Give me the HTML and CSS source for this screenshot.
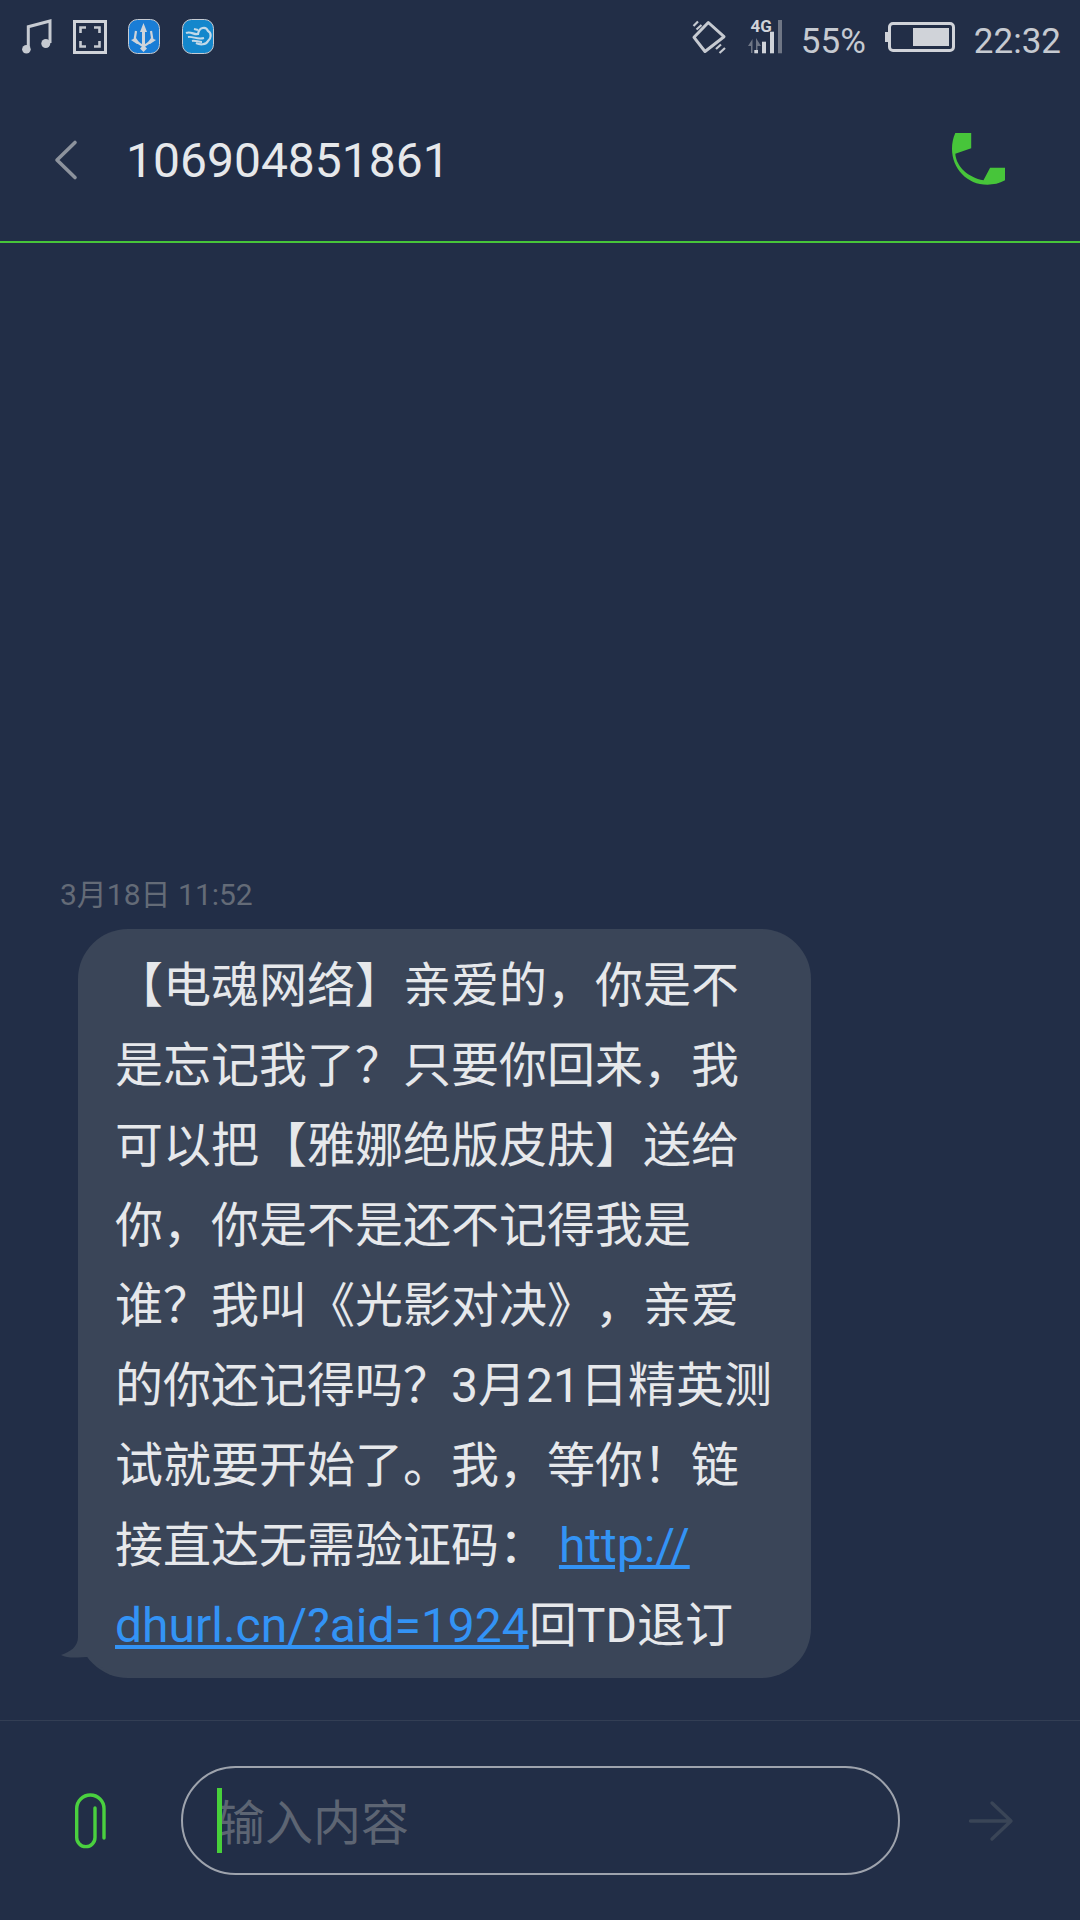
FILE: index.html

```html
<!DOCTYPE html>
<html>
  <head>
    <meta charset="UTF-8">
    <title>106904851861</title>
    <link rel="stylesheet" href="styles.css">
  </head>
  <body>
    <div class="status-bar">
      <div class="status-left">
        <svg class="icon-music" viewBox="0 0 30 34" width="30" height="34">
          <path d="M6.300 29V6.700L28 1V23" fill="none" stroke="#c6cad1" stroke-width="3"/>
          <circle cx="4.400" cy="29.300" r="4.300" fill="#c6cad1"/>
          <circle cx="23.800" cy="23.500" r="4.500" fill="#c6cad1"/>
        </svg>
        <svg class="icon-shot" viewBox="0 0 34 34" width="34" height="34">
          <rect x="1.500" y="1.500" width="31" height="31" fill="none" stroke="#d0d3d9" stroke-width="3"/>
          <path d="M7.500 13V7.500H13M21 7.500H26.500V13M26.500 21V26.500H21M13 26.500H7.500V21" fill="none" stroke="#c6cad1" stroke-width="2.600"/>
        </svg>
        <svg class="icon-app" viewBox="0 0 32 35" width="32" height="35">
          <rect x="0.500" y="0.500" width="31" height="34" rx="9" fill="#1a7dd6" stroke="#c6cad1"/>
          <path d="M15.500 4L19 13H17V28H14V13H12Z" fill="#d0d4da"/>
          <path d="M8 12L6.500 21.500L15.500 27.500L24.500 21.500L23 12" fill="none" stroke="#d0d4da" stroke-width="2.200"/>
          <path d="M3 21L8 19L12 24.500L9 25ZM28 21L23 19L19 24.500L22 25ZM15.500 26L19 29.500L15.500 33L12 29.500Z" fill="#d0d4da"/>
        </svg>
        <svg class="icon-app" viewBox="0 0 32 35" width="32" height="35">
          <rect x="0.500" y="0.500" width="31" height="34" rx="9" fill="#1487cc" stroke="#c6cad1"/>
          <path d="M4 14C9 12 12 16 16 15C17 8 24 7 26 12C30 14 29 20 26 22C24 26 18 26 14 24" fill="none" stroke="#c3d9e8" stroke-width="2.200"/>
          <path d="M6 18C11 17 15 21 22 19M10 22C13 21 16 23 20 23M12 10L16 11" fill="none" stroke="#c3d9e8" stroke-width="2"/>
        </svg>
      </div>
      <div class="status-right">
        <svg class="icon-rotate" viewBox="0 0 34 34" width="34" height="34">
          <path d="M16.300 2.500L32 16.700L13 31.500L2 17.300Z" fill="none" stroke="#c6cad1" stroke-width="3" stroke-linejoin="round"/>
          <path d="M1.500 6L6 1.500M4.500 9.500L9.500 5M24 29L29 24.500M27.500 33L33 28" fill="none" stroke="#c6cad1" stroke-width="2.200"/>
        </svg>
        <svg class="icon-signal" viewBox="0 0 34 34" width="34" height="34">
          <text x="2.500" y="12" class="net-label">4G</text>
          <path d="M0 26L4.500 19V33H3V26ZM8 25L8 18L13 26H9.500V30H8Z" fill="#6f7685"/>
          <rect x="6.300" y="30" width="3.700" height="3.300" fill="#d0d3d9"/>
          <rect x="14" y="21.700" width="4" height="11.600" fill="#d0d3d9"/>
          <rect x="22" y="11.700" width="4" height="21.600" fill="#d0d3d9"/>
          <rect x="30" y="0" width="4" height="33.300" fill="#6f7685"/>
        </svg>
        <span class="status-text percent">55%</span>
        <div class="battery">
          <div class="battery-nub"></div>
          <div class="battery-body">
            <div class="battery-fill"></div>
          </div>
        </div>
        <span class="status-text clock">22:32</span>
      </div>
    </div>

    <div class="title-bar">
      <svg class="icon-back" viewBox="0 0 24 40" width="24" height="40">
        <path d="M21 2.500L3 20L21 37.500" fill="none" stroke="#8d939d" stroke-width="3.600" stroke-linecap="round" stroke-linejoin="round"/>
      </svg>
      <div class="title">106904851861</div>
      <svg class="icon-phone" viewBox="150 66 170 166" width="57" height="55">
        <path d="M165 72H213V118L165 135C168 175 205 207 250 215L270 177H315V215C298 225 280 228 262 228C200 228 155 178 155 120C155 103 158 87 165 72Z" fill="#47c53a"/>
      </svg>
    </div>

    <div class="thread">
      <div class="date">3月18日 11:52</div>
      <div class="bubble">
        <svg class="bubble-tail" viewBox="0 0 50 60" width="50" height="60">
          <path d="M18 0V18C18 28 10 33 1 36C8 40 20 38 30 38C36 44 42 50 50 54V0Z" fill="#3a4558"/>
        </svg>
        【电魂网络】亲爱的，你是不<br>
        是忘记我了？只要你回来，我<br>
        可以把【雅娜绝版皮肤】送给<br>
        你，你是不是还不记得我是<br>
        谁？我叫《光影对决》，亲爱<br>
        的你还记得吗？3月21日精英测<br>
        试就要开始了。我，等你！链<br>
        接直达无需验证码： <a class="link" href="#">http://</a><br>
        <a class="link" href="#">dhurl.cn/?aid=1924</a>回TD退订
      </div>
    </div>

    <div class="composer">
      <svg class="icon-clip" viewBox="0 0 31 54" width="31" height="54">
        <path d="M20 14V43.500A9.150 9.150 0 0 1 1.700 43.500V14.600A13.650 13.650 0 0 1 29 14.600V44" fill="none" stroke="#4ad03f" stroke-width="3.400" stroke-linecap="round"/>
      </svg>
      <div class="input-pill">
        <div class="caret"></div>
        <span class="placeholder">输入内容</span>
      </div>
      <svg class="icon-send" viewBox="0 0 44 40" width="44" height="40">
        <path d="M1.500 20H41.500M23 2L42 20L23 38" fill="none" stroke="#3a4557" stroke-width="3.400" stroke-linecap="round" stroke-linejoin="round"/>
      </svg>
    </div>
  </body>
</html>
```

FILE: styles.css

```css
* {
box-sizing: border-box;
}

body {
display: flex;
flex-direction: column;
width: 1080px;
height: 1920px;
margin: 0;
overflow: hidden;
background-color: #222e47;
font-family: Roboto, "Noto Sans CJK SC", sans-serif;
}

svg {
display: block;
flex-shrink: 0;
overflow: visible;
}

.status-bar {
display: flex;
justify-content: space-between;
align-items: flex-start;
height: 75px;
padding: 19px 19px 0 22px;
}

.status-left {
display: flex;
align-items: flex-start;
}

.icon-music {
margin-top: 1px;
}

.icon-shot {
margin: 1px 0 0 21px;
}

.icon-app {
margin-left: 21px;
}

.status-left .icon-app + .icon-app {
margin-left: 22px;
}

.status-right {
display: flex;
align-items: flex-start;
}

.icon-rotate {
margin: 1px 22px 0 0;
}

.icon-signal {
margin: 1px 20px 0 0;
}

.net-label {
font-family: Roboto, sans-serif;
font-weight: 700;
font-size: 17px;
fill: #d0d3d9;
}

.status-text {
color: #c6cad1;
font-size: 35px;
line-height: 42px;
}

.percent {
width: 84px;
margin: 2px 0 0 -1px;
}

.clock {
margin: 2px 0 0 -1px;
}

.battery {
display: flex;
align-items: center;
margin: 3px 20px 0 0;
}

.battery-nub {
width: 3px;
height: 10px;
background-color: #d0d3d9;
}

.battery-body {
display: flex;
justify-content: flex-end;
width: 67px;
height: 30px;
padding: 3px;
border: 3px solid #d0d3d9;
border-radius: 5px;
}

.battery-fill {
width: 36px;
height: 18px;
background-color: #d0d3d9;
}

.title-bar {
display: flex;
align-items: center;
height: 168px;
padding: 4px 0 0 54px;
border-bottom: 2px solid #47c53a;
}

.title {
margin-left: 48px;
color: #e6e8eb;
font-size: 48px;
}

.icon-phone {
margin-left: auto;
margin-right: 73px;
margin-top: -4px;
}

.thread {
display: flex;
flex: 1;
flex-direction: column;
justify-content: flex-end;
padding: 0 0 42px 0;
}

.date {
margin: 0 0 14px 60px;
color: #646b77;
font-size: 30px;
line-height: 40px;
}

.bubble {
position: relative;
width: 733px;
margin-left: 78px;
padding: 17px 0 12px 37px;
border-radius: 50px;
background-color: #3a4558;
color: #e6e8eb;
font-size: 48px;
line-height: 80px;
white-space: nowrap;
text-spacing-trim: space-all;
}

.bubble-tail {
position: absolute;
left: -18px;
bottom: -1px;
}

.link {
color: #3393f5;
}

.composer {
display: flex;
align-items: center;
height: 200px;
padding-left: 75px;
border-top: 1px solid #333e54;
}

.input-pill {
position: relative;
display: flex;
align-items: center;
width: 719px;
height: 109px;
margin-left: 75px;
padding: 0 0 4px 34px;
border: 2px solid #9ea3ad;
border-radius: 55px;
}

.caret {
position: absolute;
left: 34px;
top: 20px;
width: 5px;
height: 65px;
background-color: #47d03a;
}

.placeholder {
color: #5d6573;
font-size: 48px;
}

.icon-send {
margin-left: 69px;
}
```
